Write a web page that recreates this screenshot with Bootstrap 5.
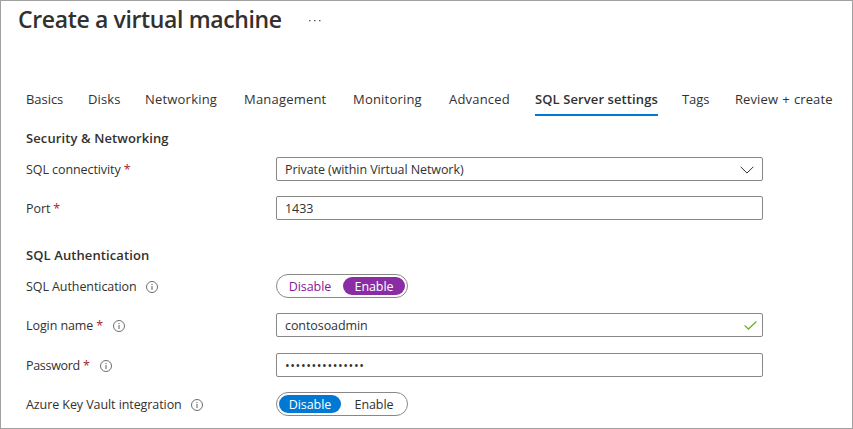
<!DOCTYPE html>
<html lang="en">
<head>
<meta charset="utf-8">
<meta name="viewport" content="width=device-width, initial-scale=1">
<title>Create a virtual machine</title>
<link href="https://cdn.jsdelivr.net/npm/bootstrap@5.3.0/dist/css/bootstrap.min.css" rel="stylesheet">
<style>
  body { font-family: "Open Sans", "Noto Sans", sans-serif; font-size: 12.5px; line-height: 18px; letter-spacing: -.08px; color: #323130; background: #fff; }
  .blade { width: 853px; height: 429px; border: 1px solid #a0a0a0; overflow: hidden; }
  .blade-head { height: 88px; padding: 2px 0 0 17px; }
  .blade-title { font-size: 23px; line-height: 32px; font-weight: 600; letter-spacing: -.36px; color: #323130; }
  .more { margin: 17px 0 0 27px; }
  .steps { padding-left: 25px; height: 27px; font-size: 13px; letter-spacing: .1px; }
  .steps .nav-link { padding: 1px 0 0; color: #323130; white-space: nowrap; height: 27px; }
  .steps .nav-link.active { font-weight: 600; border-bottom: 2px solid #0078d4; }
  .steps .nav-item:nth-child(1) { width: 62px; letter-spacing: -.05px; }
  .steps .nav-item:nth-child(2) { width: 57px; }
  .steps .nav-item:nth-child(3) { width: 99px; letter-spacing: .2px; }
  .steps .nav-item:nth-child(4) { width: 109px; letter-spacing: .2px; }
  .steps .nav-item:nth-child(5) { width: 96px; letter-spacing: .2px; }
  .steps .nav-item:nth-child(6) { width: 86px; letter-spacing: .2px; }
  .steps .nav-item:nth-child(7) { width: 123px; margin-right: 24px; }
  .steps .nav-item:nth-child(8) { width: 53px; letter-spacing: -.1px; }
  .steps .nav-item:nth-child(9) { word-spacing: .7px; }
  .settings { padding-left: 25px; }
  .section-title { font-size: 13px; line-height: 18px; font-weight: 600; letter-spacing: .1px; margin: 13px 0 10px; }
  .settings + .settings .section-title { margin-top: 26px; }
  .field-name { width: 250px; padding-top: 1px; }
  .field { height: 24px; margin-bottom: 15px; }
  .field.roomy { margin-bottom: 16px; }
  .req { color: #a4262c; margin-left: 3px; }
  .info { margin-left: 9px; }
  .req + .info { margin-left: 10px; }
  .secret { letter-spacing: -.3px; }
  .entry { width: 487px; height: 24px; padding: 1px 8px 0; border: 1px solid #8a8886; border-radius: 2px; }
  .tick { margin-right: -3px; }
  .dots { letter-spacing: .6px; }
  .switch { width: 132px; height: 24px; border: 1px solid #8a8886; border-radius: 12px; padding: 2px; gap: 2px; }
  .switch span { height: 18px; line-height: 19px; border-radius: 9px; text-align: center; width: 62px; }
  .purple { color: #881798; }
  .fill-purple { background: #8a2da5; color: #fff; }
  .fill-blue { background: #0078d4; color: #fff; }
</style>
</head>
<body>
<svg class="d-none">
  <symbol id="info" viewBox="0 0 12 12"><circle cx="6" cy="6" r="5.5" fill="none" stroke="#605e5c" stroke-width=".9"/><path d="M6 5v4M6 3v1.1" stroke="#605e5c" fill="none"/></symbol>
</svg>
<main class="blade">
  <header class="blade-head d-flex align-items-start">
    <h1 class="blade-title m-0">Create a virtual machine</h1>
    <svg class="more" width="12" height="2" viewBox="0 0 12 2" fill="#605e5c"><path d="M0 0h1.5v1.3H0zM5 0h1.5v1.3H5zM10 0h1.5v1.3H10z"/></svg>
  </header>
  <ul class="steps nav flex-nowrap">
    <li class="nav-item"><a class="nav-link" href="#">Basics</a></li>
    <li class="nav-item"><a class="nav-link" href="#">Disks</a></li>
    <li class="nav-item"><a class="nav-link" href="#">Networking</a></li>
    <li class="nav-item"><a class="nav-link" href="#">Management</a></li>
    <li class="nav-item"><a class="nav-link" href="#">Monitoring</a></li>
    <li class="nav-item"><a class="nav-link" href="#">Advanced</a></li>
    <li class="nav-item"><a class="nav-link active" href="#">SQL Server settings</a></li>
    <li class="nav-item"><a class="nav-link" href="#">Tags</a></li>
    <li class="nav-item"><a class="nav-link" href="#">Review + create</a></li>
  </ul>
  <section class="settings">
    <h2 class="section-title">Security &amp; Networking</h2>
    <div class="field d-flex align-items-center">
      <div class="field-name d-flex align-items-center"><span>SQL connectivity</span><span class="req">*</span></div>
      <div class="entry d-flex align-items-center justify-content-between"><span>Private (within Virtual Network)</span>
        <svg width="14" height="8" viewBox="0 0 14 8" fill="none" stroke="#323130"><path d="M.7.8 7 7.1 13.3.8"/></svg></div>
    </div>
    <div class="field d-flex align-items-center">
      <div class="field-name d-flex align-items-center"><span>Port</span><span class="req">*</span></div>
      <div class="entry d-flex align-items-center"><span>1433</span></div>
    </div>
  </section>
  <section class="settings">
    <h2 class="section-title">SQL Authentication</h2>
    <div class="field d-flex align-items-center">
      <div class="field-name d-flex align-items-center"><span>SQL Authentication</span><svg class="info" width="12" height="12"><use href="#info"/></svg></div>
      <div class="switch d-flex"><span class="purple">Disable</span><span class="fill-purple">Enable</span></div>
    </div>
    <div class="field roomy d-flex align-items-center">
      <div class="field-name d-flex align-items-center"><span>Login name</span><span class="req">*</span><svg class="info" width="12" height="12"><use href="#info"/></svg></div>
      <div class="entry d-flex align-items-center justify-content-between"><span>contosoadmin</span>
        <svg class="tick" width="13" height="9" viewBox="0 0 13 9" fill="none" stroke="#6bb02c" stroke-width="1.3"><path d="M.6 4.4 4.4 8 12.4.6"/></svg></div>
    </div>
    <div class="field d-flex align-items-center">
      <div class="field-name d-flex align-items-center"><span class="secret">Password</span><span class="req">*</span><svg class="info" width="12" height="12"><use href="#info"/></svg></div>
      <div class="entry d-flex align-items-center"><span class="dots">•••••••••••••••</span></div>
    </div>
    <div class="field d-flex align-items-center">
      <div class="field-name d-flex align-items-center"><span>Azure Key Vault integration</span><svg class="info" width="12" height="12"><use href="#info"/></svg></div>
      <div class="switch d-flex"><span class="fill-blue">Disable</span><span>Enable</span></div>
    </div>
  </section>
</main>
<script src="https://cdn.jsdelivr.net/npm/bootstrap@5.3.0/dist/js/bootstrap.bundle.min.js"></script>
</body>
</html>
